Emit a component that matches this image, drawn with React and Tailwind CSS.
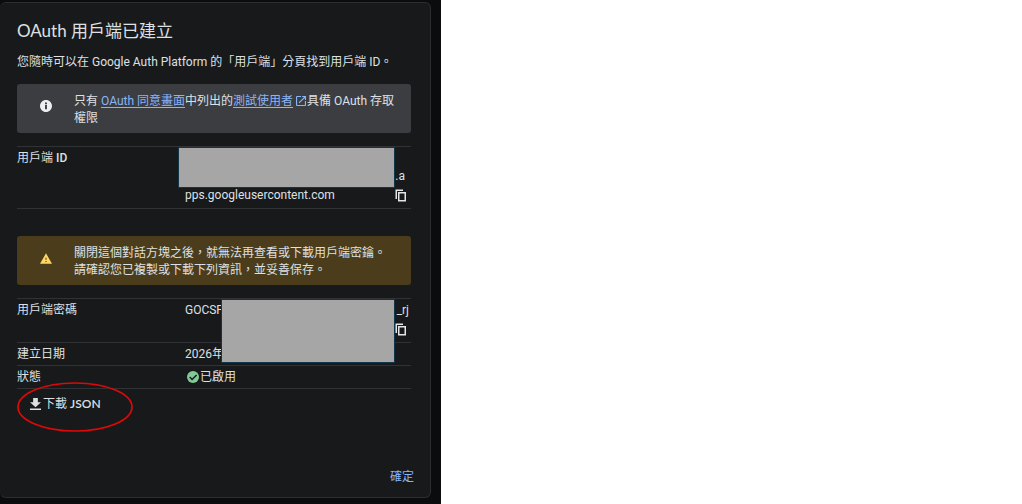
import React from 'react';

function InfoIcon() {
  return (
    <svg viewBox="2 2 20 20" className="mt-[7px] size-3 shrink-0" fill="#eceef0" aria-hidden="true">
      <path d="M12 2C6.48 2 2 6.48 2 12s4.48 10 10 10 10-4.48 10-10S17.52 2 12 2zm1.600 15.500h-3.200v-7h3.200v7zm0-8.300h-3.200V6.200h3.200v3z" />
    </svg>
  );
}

function WarningIcon() {
  return (
    <svg viewBox="1 2 22 19" className="mt-2 h-[11px] w-3 shrink-0" fill="#fdd663" aria-hidden="true">
      <path d="M1 21h22L12 2 1 21zm12-3h-2v-2h2v2zm0-4h-2v-4h2v4z" />
    </svg>
  );
}

function ExternalIcon() {
  return (
    <svg viewBox="3 3 18 18" className="mr-px ml-[3px] inline-block size-[10px] align-[-1px]" fill="#8ab4f8" aria-hidden="true">
      <path d="M19 19H5V5h7V3H5a2 2 0 0 0-2 2v14a2 2 0 0 0 2 2h14c1.100 0 2-.9 2-2v-7h-2v7zM14 3v2h3.590l-9.830 9.830 1.410 1.410L19 6.410V10h2V3h-7z" />
    </svg>
  );
}

function CopyButton({ label }) {
  return (
    <button type="button" aria-label={label} className="mr-[5px] block cursor-pointer">
      <svg viewBox="0 0 11 13" className="h-[13px] w-[11px]" fill="none" stroke="#e3e5e8" strokeWidth="1.500" aria-hidden="true">
        <path d="M8 1.250H1.250V10" />
        <rect x="3.750" y="3.750" width="6.500" height="8" />
      </svg>
    </button>
  );
}

function Notice({ icon, className, children }) {
  return (
    <div className={`flex items-start gap-[22px] rounded-[3px] pt-[9px] pr-3 pb-[6px] pl-[23px] leading-[17px] ${className}`}>
      {icon}
      <p>{children}</p>
    </div>
  );
}

function Row({ label, children, last = false, className = 'pb-[2px]' }) {
  const line = last ? 'border-y' : 'border-t';
  return (
    <tr>
      <th scope="row" className={`w-[168px] border-[#303235] pt-[2px] text-left align-top font-normal ${line}`}>
        {label}
      </th>
      <td className={`relative border-[#303235] pt-[2px] align-top ${line} ${className}`}>{children}</td>
    </tr>
  );
}

const tableClass = 'w-full border-separate border-spacing-0 leading-[18px]';

export default function App() {
  return (
    <div className="min-h-screen bg-white font-[Roboto,'Noto_Sans_CJK_TC',sans-serif] text-[12px] text-[#dee0e3]">
      <div className="max-w-[441px] bg-[#0b0c0d] pt-[2px] pr-[10px] pb-[6px]">
        <main className="rounded-md border border-l-0 border-[#2b2f32] bg-[#18191b] pt-[15px] pr-[19px] pb-[10px] pl-[17px]">
          <h1 className="font-[Lato,'Noto_Sans_CJK_TC',sans-serif] text-[17px] leading-[26px]">OAuth 用戶端已建立</h1>
          <p className="mt-[9px] mb-[13px] leading-[18px]">
            您隨時可以在 Google Auth Platform 的「用戶端」分頁找到用戶端 ID。
          </p>

          <Notice icon={<InfoIcon />} className="bg-[#3b3d41]">
            只有{' '}
            <a href="#consent" className="text-[#8ab4f8] underline underline-offset-2">OAuth 同意畫面</a>
            中列出的
            <a href="#testers" className="text-[#8ab4f8] underline underline-offset-2">測試使用者</a>
            <ExternalIcon />
            具備 OAuth 存取權限
          </Notice>

          <table className={`mt-[13px] ${tableClass}`}>
            <tbody>
              <Row
                label={<>用戶端 <span className="font-medium">ID</span></>}
                last
                className="pb-[4px]"
              >
                <div className="pt-[18px] pr-[6px] text-right">.a</div>
                <div className="flex items-center justify-between pt-px">
                  <span>pps.googleusercontent.com</span>
                  <CopyButton label="複製用戶端 ID" />
                </div>
                <div className="absolute top-0 right-4 -left-[7px] h-[41px] border border-[#123548] bg-[#a6a6a6]" />
              </Row>
            </tbody>
          </table>

          <div className="mt-[27px]">
            <Notice icon={<WarningIcon />} className="bg-[#4b3d1c]">
              關閉這個對話方塊之後，就無法再查看或下載用戶端密鑰。
              <br />
              請確認您已複製或下載下列資訊，並妥善保存。
            </Notice>
          </div>

          <table className={`mt-[13px] ${tableClass}`}>
            <tbody>
              <Row label="用戶端密碼">
                <div className="flex justify-between pr-[2px]">
                  <span>GOCSP</span>
                  <span>_rj</span>
                </div>
                <div className="flex h-[21px] items-center justify-end">
                  <CopyButton label="複製用戶端密碼" />
                </div>
                <div className="absolute top-0 right-4 left-9 z-10 h-16 border border-[#123548] bg-[#a6a6a6]" />
              </Row>
              <Row label="建立日期">2026年</Row>
              <Row label="狀態" last>
                <span className="flex items-center gap-px pl-[2px]">
                  <svg viewBox="2 2 20 20" className="size-3" fill="#81c995" aria-hidden="true">
                    <circle cx="12" cy="12" r="10" />
                    <path d="m6.500 12 4 4 7.500-7.500" fill="none" stroke="#18191b" strokeWidth="2.400" />
                  </svg>
                  已啟用
                </span>
              </Row>
            </tbody>
          </table>

          <div className="relative flex h-[43px] items-start pt-[6px] pl-[13px]">
            <button type="button" className="flex cursor-pointer items-center leading-[18px]">
              <svg viewBox="5 3 14 17" className="h-3 w-[11px]" preserveAspectRatio="none" fill="currentColor" aria-hidden="true">
                <path d="M19 9h-4V3H9v6H5l7 7 7-7zM5 18v2h14v-2H5z" />
              </svg>
              <span className="ml-[2px] font-[Lato,'Noto_Sans_CJK_TC',sans-serif]">
                下載 <span className="font-semibold">JSON</span>
              </span>
            </button>
            <svg viewBox="0 0 116 50" className="pointer-events-none absolute -top-[7px] left-0 h-[50px] w-[116px]" aria-hidden="true">
              <ellipse cx="58" cy="25" rx="57" ry="24" fill="none" stroke="#df0808" strokeWidth="1.700" />
            </svg>
          </div>

          <div className="mt-[35px] flex justify-end">
            <button type="button" className="-mr-[3px] cursor-pointer leading-[20px] text-[#8ab4f8]">確定</button>
          </div>
        </main>
      </div>
    </div>
  );
}
